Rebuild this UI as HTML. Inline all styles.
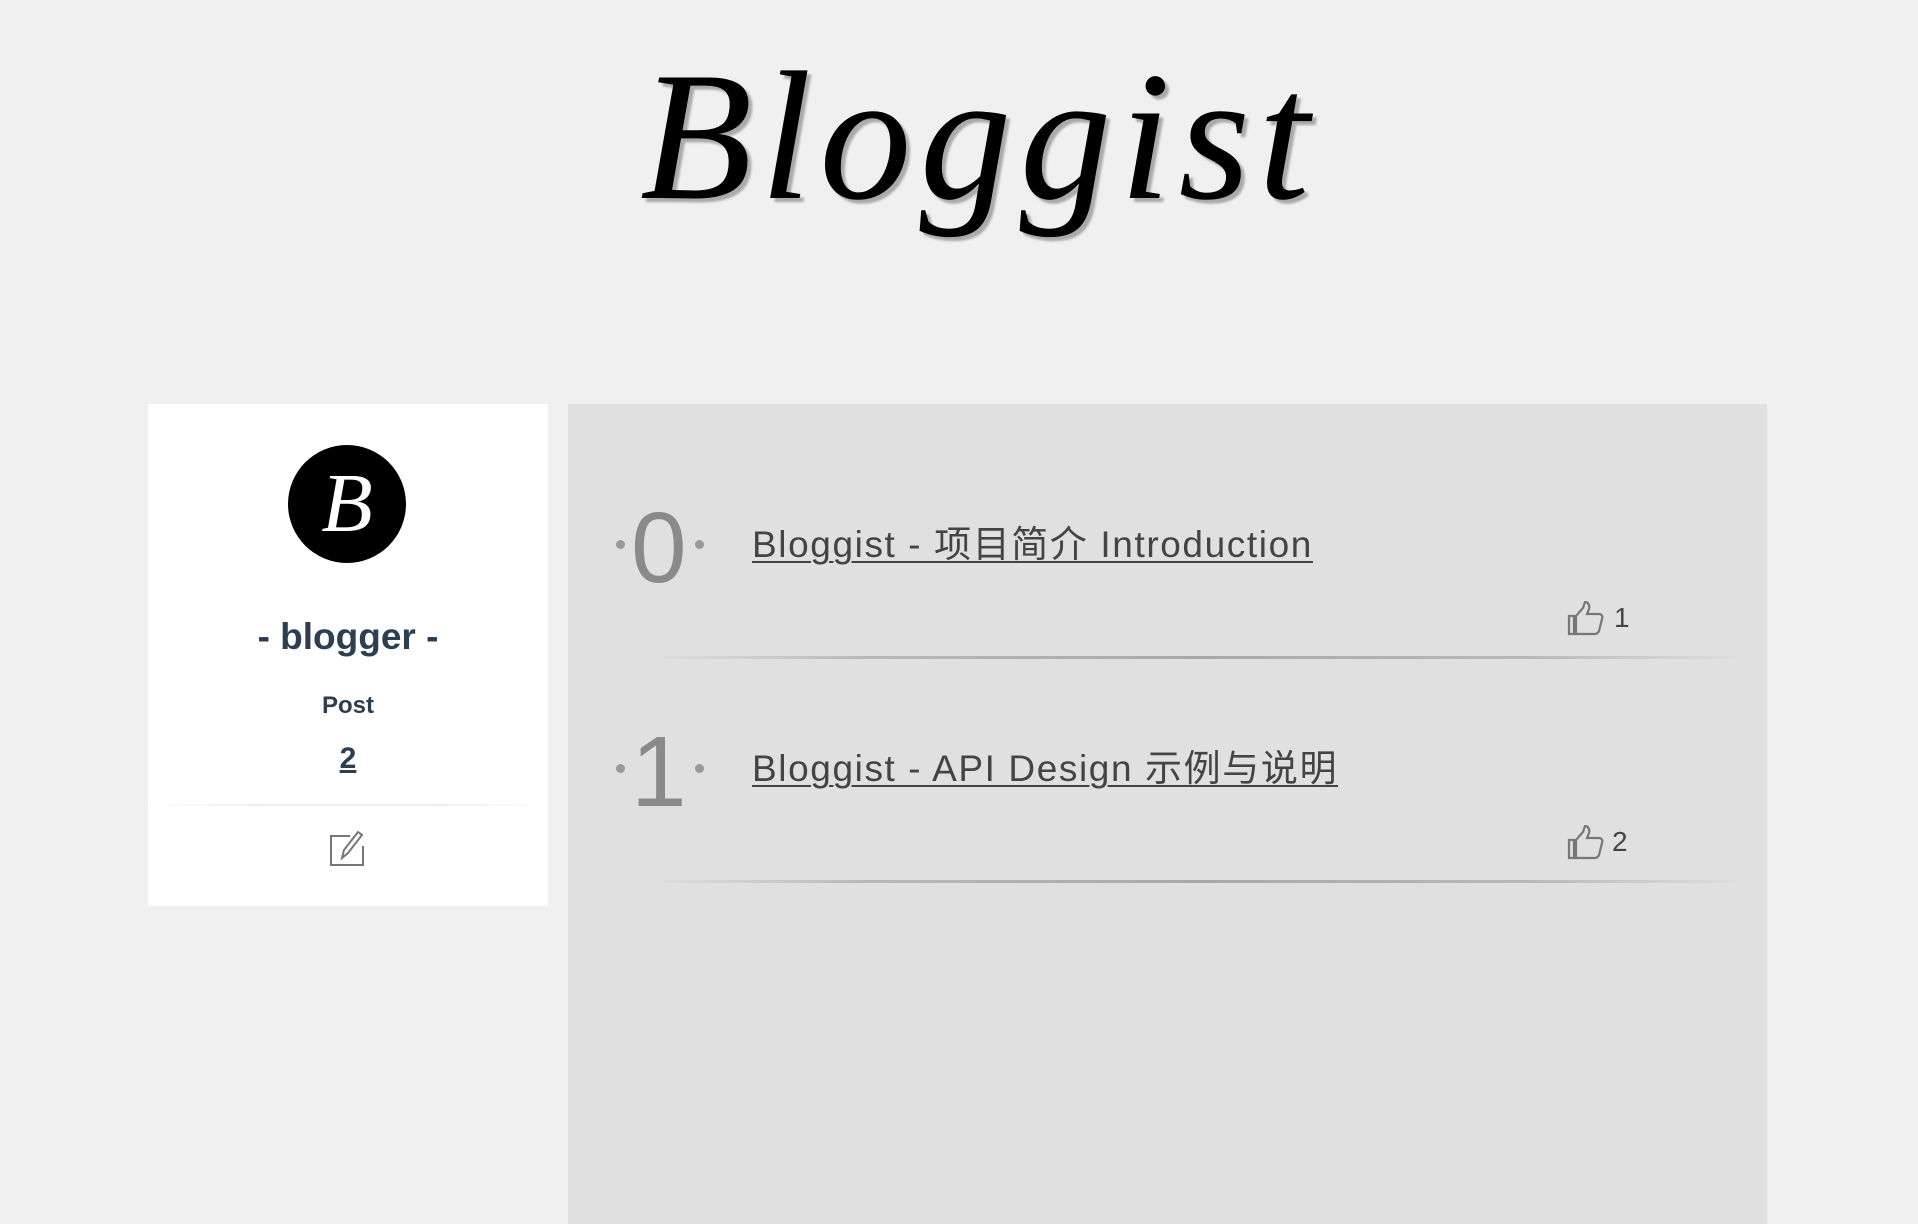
<!DOCTYPE html>
<html><head><meta charset="utf-8"><style>
html,body{margin:0;padding:0;}
body{width:1918px;height:1224px;background:#f0f0f0;position:relative;overflow:hidden;font-family:"Liberation Sans","Noto Sans CJK SC",sans-serif;}
.logo{position:absolute;left:640px;top:44px;width:640px;text-align:center;font-family:"Liberation Serif",serif;font-style:italic;font-size:184px;line-height:1;color:#000;text-shadow:4px 4px 2px #aaa;letter-spacing:8px;}
.card{position:absolute;left:148px;top:404px;width:400px;height:502px;background:#fff;}
.av{position:absolute;left:140px;top:41px;width:118px;height:118px;border-radius:50%;background:#000;color:#fff;font-family:"Liberation Serif",serif;font-style:italic;font-size:84px;line-height:118px;text-align:center;}
.name{position:absolute;top:616px;left:148px;width:400px;text-align:center;font-size:37px;font-weight:bold;color:#2c3e50;}
.card .t{position:absolute;left:0;width:400px;text-align:center;color:#2c3e50;font-weight:bold;}
.div{position:absolute;left:0;top:400px;width:400px;height:2px;background:linear-gradient(90deg,#fff,#eee 30%,#eee 70%,#fff);}
.panel{position:absolute;left:568px;top:404px;width:1199px;height:820px;background:#e0e0e0;}
.num{position:absolute;color:#8a8a8a;font-size:100px;line-height:1;}
.dot{position:absolute;width:9px;height:9px;border-radius:50%;background:#999;}
.ttl{position:absolute;left:752px;font-size:37px;color:#444;letter-spacing:1.6px;text-decoration:underline;text-decoration-thickness:2px;text-underline-offset:4px;white-space:nowrap;}
.cnt{position:absolute;font-size:28px;color:#444;}
.sep{position:absolute;left:648px;width:1101px;height:3px;background:linear-gradient(90deg,#e0e0e0,#b8b8b8 20%,#a8a8a8 50%,#b8b8b8 80%,#e0e0e0);}
</style></head><body>
<div class="logo">Bloggist</div>
<div class="card">
  <div class="av">B</div>
  <div class="t" style="top:288px;font-size:24px;">Post</div>
  <div class="t" style="top:338px;font-size:30px;text-decoration:underline;">2</div>
  <div class="div"></div>
  <svg style="position:absolute;left:180px;top:424px" width="40" height="40" viewBox="0 0 40 40" fill="none" stroke="#777" stroke-width="2"><path d="M22 8H3v29h32V18"/><path d="M14 30l2-8 14-18 4 3-14 18z"/></svg>
</div>
<div class="name">- blogger -</div>
<div class="panel"></div>

<div class="dot" style="left:616px;top:540px"></div>
<div class="num" style="left:631px;top:498px">0</div>
<div class="dot" style="left:695px;top:540px"></div>
<a class="ttl" style="top:514px">Bloggist - 项目简介 Introduction</a>
<svg style="position:absolute;left:1566px;top:601px" width="40" height="36" viewBox="0 0 40 36" fill="none" stroke="#777" stroke-width="2.2"><path d="M3 15h5v18H3z"/><path d="M10 15l7-8 2-6c3 0 5 3 4 7l-2 5h12c3 0 4 3 3 5l-3 12c-1 2-2 3-4 3H10z"/></svg>
<div class="cnt" style="left:1614px;top:602px">1</div>
<div class="sep" style="top:656px"></div>

<div class="dot" style="left:616px;top:764px"></div>
<div class="num" style="left:631px;top:722px">1</div>
<div class="dot" style="left:695px;top:764px"></div>
<a class="ttl" style="top:738px">Bloggist - API Design 示例与说明</a>
<svg style="position:absolute;left:1566px;top:825px" width="40" height="36" viewBox="0 0 40 36" fill="none" stroke="#777" stroke-width="2.2"><path d="M3 15h5v18H3z"/><path d="M10 15l7-8 2-6c3 0 5 3 4 7l-2 5h12c3 0 4 3 3 5l-3 12c-1 2-2 3-4 3H10z"/></svg>
<div class="cnt" style="left:1612px;top:826px">2</div>
<div class="sep" style="top:880px"></div>
</body></html>
